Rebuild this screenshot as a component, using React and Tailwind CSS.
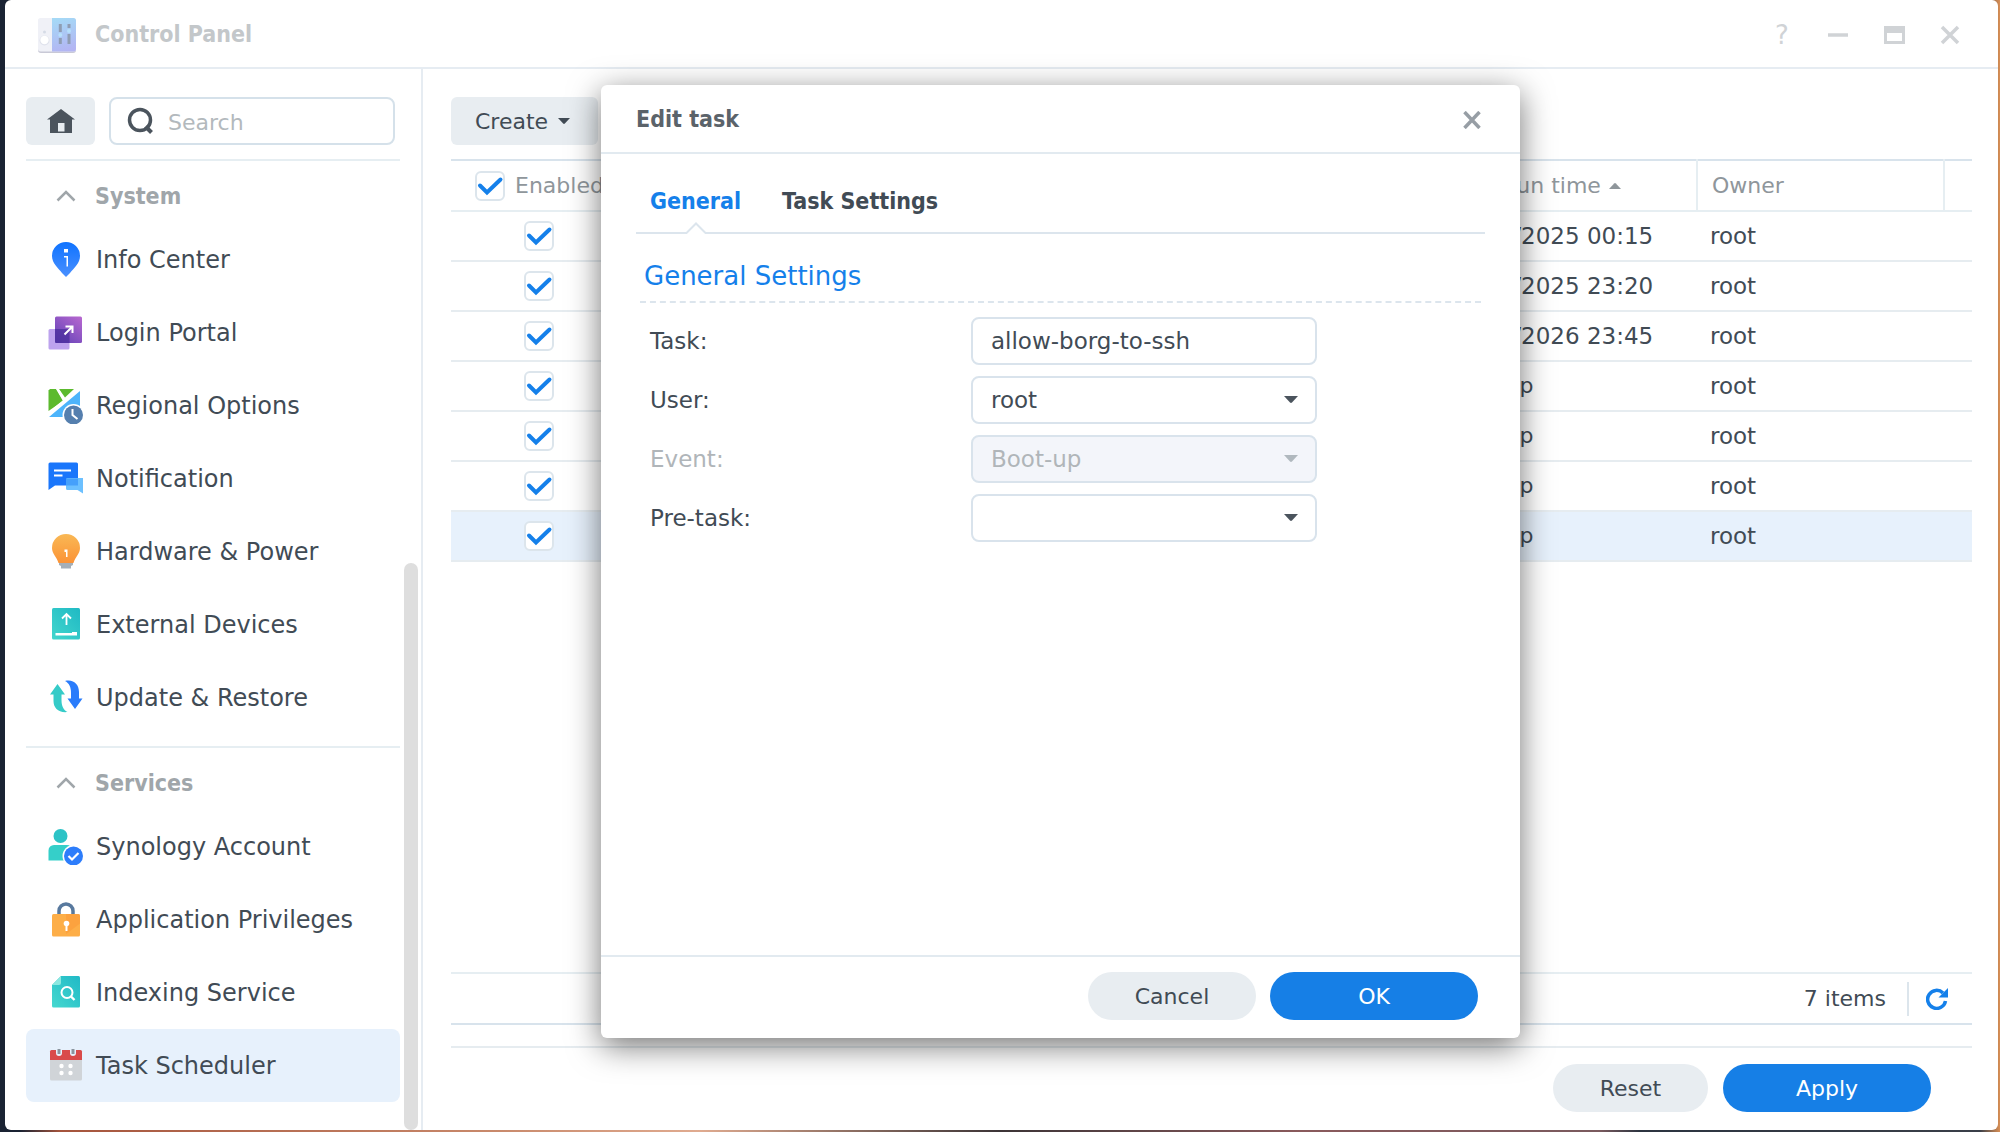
import React, { useState } from "react";

const systemItems = [
  { name: "Info Center", icon: InfoIcon },
  { name: "Login Portal", icon: LoginIcon },
  { name: "Regional Options", icon: RegionIcon },
  { name: "Notification", icon: NotificationIcon },
  { name: "Hardware & Power", icon: BulbIcon },
  { name: "External Devices", icon: DeviceIcon },
  { name: "Update & Restore", icon: UpdateIcon },
];

const serviceItems = [
  { name: "Synology Account", icon: AccountIcon },
  { name: "Application Privileges", icon: LockIcon },
  { name: "Indexing Service", icon: IndexIcon },
  { name: "Task Scheduler", icon: CalendarIcon },
];

const initialTasks = [
  { id: 1, next: "12/12/2025 00:15", owner: "root", enabled: true },
  { id: 2, next: "12/12/2025 23:20", owner: "root", enabled: true },
  { id: 3, next: "01/01/2026 23:45", owner: "root", enabled: true },
  { id: 4, next: "Boot-up", owner: "root", enabled: true },
  { id: 5, next: "Boot-up", owner: "root", enabled: true },
  { id: 6, next: "Boot-up", owner: "root", enabled: true },
  { id: 7, next: "Boot-up", owner: "root", enabled: true },
];

function InfoIcon() {
  return (
    <svg viewBox="0 0 36 36" className="h-9 w-9">
      <defs>
        <linearGradient id="info" x1="0" y1="0" x2="0" y2="1">
          <stop offset="0" stopColor="#0f73ff" />
          <stop offset="1" stopColor="#4a90ff" />
        </linearGradient>
      </defs>
      <path d="M18 0a14 14 0 0 1 14 14c0 7-6 12-10 17l-4 4-4-4C10 26 4 21 4 14A14 14 0 0 1 18 0z" fill="url(#info)" />
      <path d="M16 7h4v3.500h-4zM16 14h4v10.500h-1.500V15.500H16z" fill="#fff" />
    </svg>
  );
}

function LoginIcon() {
  return (
    <svg viewBox="0 0 36 36" className="h-9 w-9">
      <defs>
        <linearGradient id="login" x1="1" y1="0" x2="0.2" y2="1">
          <stop offset="0" stopColor="#b968d0" />
          <stop offset="1" stopColor="#6544b8" />
        </linearGradient>
      </defs>
      <rect x="0.500" y="14" width="21" height="20.500" rx="1.500" fill="#bda3ee" />
      <rect x="7" y="1.500" width="27" height="26.500" rx="1.500" fill="url(#login)" />
      <path d="M7 14h14.500v14H8.500A1.500 1.500 0 0 1 7 26.500z" fill="#4a2f9c" fillOpacity="0.750" />
      <path d="M16.500 19.500L24 12M17.500 11.500h7V18" fill="none" stroke="#fff" strokeWidth="2" />
    </svg>
  );
}

function RegionIcon() {
  return (
    <svg viewBox="0 0 36 36" className="h-9 w-9">
      <path d="M2 1h6l7 12L0.500 23V2.500z" fill="#5cba2e" />
      <path d="M11 1h15L17 9.500z" fill="#5cba2e" />
      <path d="M32 2v27H1L32 3z" fill="#4db4fb" />
      <path d="M0 26L31 0.500M9 0l7 12" stroke="#fff" strokeWidth="2.200" fill="none" />
      <circle cx="25.500" cy="27" r="11" fill="#fff" />
      <circle cx="25.500" cy="27" r="9.500" fill="#557fae" />
      <path d="M24.500 21v6l5 4" fill="none" stroke="#fff" strokeWidth="2" />
    </svg>
  );
}

function NotificationIcon() {
  return (
    <svg viewBox="0 0 36 36" className="h-9 w-9">
      <path d="M2 1.500h26.500a1.500 1.500 0 0 1 1.500 1.500v21.500H7L0.500 29V3A1.500 1.500 0 0 1 2 1.500z" fill="#1a76fb" />
      <path d="M19.500 17H35v15.500L29.500 29h-10A1.500 1.500 0 0 1 18 27.500v-9a1.500 1.500 0 0 1 1.500-1.500z" fill="#6cc0ff" />
      <path d="M18 17.500h12v7H18z" fill="#45a0fb" />
      <path d="M6 9.500h17M6 14.500h8.500" stroke="#fff" strokeWidth="2" />
    </svg>
  );
}

function BulbIcon() {
  return (
    <svg viewBox="0 0 36 36" className="h-9 w-9">
      <defs>
        <linearGradient id="bulb" x1="0" y1="0" x2="0" y2="1">
          <stop offset="0" stopColor="#f9b855" />
          <stop offset="1" stopColor="#fb9336" />
        </linearGradient>
      </defs>
      <path d="M11 29h14v2l-2 1v2.500H13V32l-2-1z" fill="#a5afb8" />
      <path d="M18 0a14 14 0 0 1 14 14c0 6-5 9-6.500 15h-15C9 23 4 20 4 14A14 14 0 0 1 18 0z" fill="url(#bulb)" />
      <path d="M16.500 15.500h3v7.500h-1.500v-5h-1.500z" fill="#fff" />
    </svg>
  );
}

function DeviceIcon() {
  return (
    <svg viewBox="0 0 36 36" className="h-9 w-9">
      <defs>
        <linearGradient id="device" x1="1" y1="0" x2="0" y2="1">
          <stop offset="0" stopColor="#1fb9c4" />
          <stop offset="1" stopColor="#42d6cd" />
        </linearGradient>
      </defs>
      <rect x="4" y="1" width="28" height="31.500" rx="1.500" fill="url(#device)" />
      <path d="M18.500 18V7.500M14 11.500L18.500 7l4.500 4.500" fill="none" stroke="#fff" strokeWidth="1.800" />
      <path d="M7.500 26H24v-1h5v3.500H7.500z" fill="#fff" />
    </svg>
  );
}

function UpdateIcon() {
  return (
    <svg viewBox="0 0 36 36" className="h-9 w-9">
      <path d="M9.500 4L17 14.500h-3.500V20c0 6 2 10 6 12-9 1-14-4-14-11v-6.500H2z" fill="#35cbc8" />
      <path d="M27 29L19.500 18.500H23V13c0-6-2-10-6-12 9-2 14 4 14 11v6.500h3.500z" fill="#2a7cfb" />
    </svg>
  );
}

function AccountIcon() {
  return (
    <svg viewBox="0 0 36 36" className="h-9 w-9">
      <circle cx="12.500" cy="7" r="7" fill="#2cc3c6" />
      <path d="M6 16h13a5 5 0 0 1 5 5v10.500H0.500V21.500A5.500 5.500 0 0 1 6 16z" fill="#35cfc9" />
      <circle cx="25.500" cy="27" r="11" fill="#fff" />
      <circle cx="25.500" cy="27" r="9.500" fill="#2d7dfb" />
      <path d="M20.500 27l3.500 3.500 6.500-6.500" fill="none" stroke="#fff" strokeWidth="2.200" />
    </svg>
  );
}

function LockIcon() {
  return (
    <svg viewBox="0 0 36 36" className="h-9 w-9">
      <path d="M11 13V9a7 7 0 0 1 14 0v4" fill="none" stroke="#58799e" strokeWidth="3.500" />
      <rect x="4" y="12" width="28" height="22.500" rx="1.500" fill="#fdae48" />
      <path d="M18 12h12.500a1.500 1.500 0 0 1 1.500 1.500v8L18 32z" fill="#fb9a3a" fillOpacity="0.600" />
      <circle cx="18.500" cy="21.500" r="2.800" fill="#fff" />
      <path d="M17.500 22h2v7h-2z" fill="#fff" />
    </svg>
  );
}

function IndexIcon() {
  return (
    <svg viewBox="0 0 36 36" className="h-9 w-9">
      <defs>
        <linearGradient id="index" x1="1" y1="0" x2="0" y2="1">
          <stop offset="0" stopColor="#20b9c6" />
          <stop offset="1" stopColor="#45d8cf" />
        </linearGradient>
      </defs>
      <path d="M13 1h17.500A1.500 1.500 0 0 1 32 2.500V31a1.500 1.500 0 0 1-1.500 1.500h-25A1.500 1.500 0 0 1 4 31V10z" fill="url(#index)" />
      <path d="M13 1v7a2 2 0 0 1-2 2H4z" fill="#8be8e0" />
      <circle cx="19" cy="17.500" r="5.500" fill="none" stroke="#fff" strokeWidth="2" />
      <path d="M23 21.500l3.500 3.500" stroke="#fff" strokeWidth="2.400" />
    </svg>
  );
}

function CalendarIcon() {
  return (
    <svg viewBox="0 0 36 36" className="h-9 w-9">
      <path d="M2 11h32v20a1.500 1.500 0 0 1-1.500 1.500h-29A1.500 1.500 0 0 1 2 31z" fill="#d0d4d8" />
      <path d="M3.500 2h29A1.500 1.500 0 0 1 34 3.500v8.500H2V3.500A1.500 1.500 0 0 1 3.500 2z" fill="#d94a4a" />
      <path d="M8 1h6v4a3 3 0 0 1-6 0zM22 1h6v4a3 3 0 0 1-6 0z" fill="#e7f1fc" />
      <path d="M11 1v5M25 1v5" stroke="#8a949e" strokeWidth="3" />
      <g fill="#fff">
        <circle cx="13.500" cy="18" r="2.200" />
        <circle cx="22.500" cy="18" r="2.200" />
        <circle cx="13.500" cy="25" r="2.200" />
        <circle cx="22.500" cy="25" r="2.200" />
      </g>
    </svg>
  );
}

function ControlPanelIcon() {
  return (
    <svg viewBox="0 0 40 36" className="h-9 w-10">
      <defs>
        <linearGradient id="panel" x1="0.300" y1="0" x2="0.500" y2="1">
          <stop offset="0" stopColor="#a5d9f6" />
          <stop offset="1" stopColor="#b3b5f3" />
        </linearGradient>
      </defs>
      <rect x="1" y="2" width="38" height="34" rx="3" fill="#c9c9d6" />
      <rect x="1" y="1" width="38" height="33.500" rx="2.500" fill="#f0f1f7" />
      <path d="M15 1h21.500A2.500 2.500 0 0 1 39 3.500V32a2.500 2.500 0 0 1-2.500 2.500H15z" fill="url(#panel)" />
      <circle cx="7.500" cy="15" r="1.500" fill="#d5dbe6" />
      <circle cx="7.500" cy="23.500" r="5" fill="#dfe2ec" />
      <circle cx="7.500" cy="23" r="4.200" fill="#fff" />
      <path d="M23.300 7v8M23.300 21v6M32 7v4M32 17v10" stroke="#8f9db3" strokeWidth="3" />
      <circle cx="23.300" cy="18" r="2" fill="#b5e0fb" />
      <circle cx="32" cy="14" r="2" fill="#b5e0fb" />
    </svg>
  );
}

const Caret = ({ className }) => (
  <svg viewBox="0 0 14 7" className={className}>
    <path d="M0 0h14L8 6.500a1.500 1.500 0 0 1-2 0z" fill="currentColor" />
  </svg>
);

const CheckBox = ({ checked, onChange, label }) => (
  <span className="relative block h-[30px] w-[30px] shrink-0">
    <input
      type="checkbox"
      aria-label={label}
      checked={checked}
      onChange={onChange}
      className="block h-[30px] w-[30px] appearance-none rounded-md border-2 border-[#dce5ec] bg-white"
    />
    {checked && (
      <svg viewBox="0 0 30 30" className="pointer-events-none absolute inset-0 h-[30px] w-[30px]">
        <path d="M5 14.500l7 7L25.500 8.500" fill="none" stroke="#1580ea" strokeWidth="4" strokeLinecap="round" />
      </svg>
    )}
  </span>
);

const NavGroup = ({ title, items, selected, onSelect }) => (
  <section className="border-t-2 border-[#e6eef2]">
    <h2 className="flex h-[62px] items-center pt-2">
      <button
        type="button"
        className="flex items-center gap-[19px] pl-[30px] font-['DejaVu_Sans_Condensed','DejaVu_Sans',sans-serif] text-[23px] font-bold text-[#a0a6aa]"
      >
        <svg viewBox="0 0 20 12" className="h-3 w-5">
          <path d="M1.500 10.500L10 2l8.500 8.500" fill="none" stroke="currentColor" strokeWidth="2.500" />
        </svg>
        {title}
      </button>
    </h2>
    <ul>
      {items.map((item) => (
        <li key={item.name}>
          <a
            href="#"
            onClick={() => onSelect(item.name)}
            className={`flex h-[73px] items-center gap-3 rounded-lg pl-[22px] text-2xl whitespace-nowrap ${
              selected === item.name ? "bg-[#e7f1fc]" : ""
            }`}
          >
            <item.icon />
            {item.name}
          </a>
        </li>
      ))}
    </ul>
  </section>
);

const Sidebar = () => {
  const [selected, setSelected] = useState("Task Scheduler");

  return (
    <aside className="flex w-[418px] shrink-0 flex-col border-r-2 border-[#e6ecf2] pt-7">
      <div className="flex gap-[14px] pr-[26px] pb-[14px] pl-[21px]">
        <button
          type="button"
          aria-label="Home"
          className="flex h-12 w-[69px] items-center justify-center rounded-md bg-[#e8edf1]"
        >
          <svg viewBox="0 0 28 26" className="h-[26px] w-7">
            <path d="M14 1l14 10.500h-3V25H3V11.500H0zM11 15v8.500h6.500V15z" fill="#4b545d" fillRule="evenodd" />
          </svg>
        </button>
        <label className="flex h-12 min-w-0 flex-1 items-center gap-[15px] rounded-lg border-2 border-[#d5e1ea] pl-4">
          <svg viewBox="0 0 26 28" className="h-7 w-[26px] shrink-0">
            <circle cx="13" cy="13" r="10.500" fill="none" stroke="#4b545d" strokeWidth="3.500" />
            <path d="M18.500 19.500l6 6" stroke="#4b545d" strokeWidth="4" />
          </svg>
          <input
            type="text"
            aria-label="Search"
            placeholder="Search"
            className="w-full min-w-0 bg-transparent pt-[2px] text-[22px] outline-none placeholder:text-[#b3b9bd]"
          />
        </label>
      </div>
      <div className="flex flex-1 gap-1">
        <nav className="ml-[21px] flex flex-1 flex-col gap-3">
          <NavGroup title="System" items={systemItems} selected={selected} onSelect={setSelected} />
          <NavGroup title="Services" items={serviceItems} selected={selected} onSelect={setSelected} />
        </nav>
        {/* scrollbar */}
        <div className="mr-[3px] flex w-[14px] flex-col justify-end">
          <div className="h-[567px] rounded-full bg-[#dedede]"></div>
        </div>
      </div>
    </aside>
  );
};

const TaskTable = () => {
  const [tasks, setTasks] = useState(initialTasks);
  const allEnabled = tasks.every((t) => t.enabled);

  const toggle = (id) => {
    setTasks(tasks.map((t) => (t.id === id ? { ...t, enabled: !t.enabled } : t)));
  };

  const toggleAll = () => {
    setTasks(tasks.map((t) => ({ ...t, enabled: !allEnabled })));
  };

  return (
    <table className="w-full table-fixed border-collapse">
      <colgroup>
        <col className="w-[176px]" />
        <col />
        <col className="w-[264px]" />
        <col className="w-[247px]" />
        <col className="w-7" />
      </colgroup>
      <thead>
        <tr className="h-[51px] border-t-2 border-b-2 border-t-[#d8e3ec] border-b-[#e6eef2] text-left text-[22px] text-[#8f969b]">
          <th className="py-0 pl-6 font-normal">
            <span className="flex items-center gap-[10px]">
              <CheckBox checked={allEnabled} onChange={toggleAll} label="Enable all" />
              Enabled
            </span>
          </th>
          <th></th>
          <th className="border-r-2 border-[#e6eef2] py-0 pl-4 font-normal">
            <span className="flex items-center gap-2 whitespace-nowrap">
              Next run time
              <Caret className="h-[6px] w-3 rotate-180" />
            </span>
          </th>
          <th className="border-r-2 border-[#e6eef2] py-0 pl-[14px] font-normal">Owner</th>
          <th></th>
        </tr>
      </thead>
      <tbody>
        {tasks.map((task) => (
          <tr
            key={task.id}
            className={`h-[50px] border-b-2 border-[#e6ecf0] text-[23px] leading-7 ${task.id === 7 ? "bg-[#e7f1fc]" : ""}`}
          >
            <td className="p-0">
              <span className="flex justify-center">
                <CheckBox checked={task.enabled} onChange={() => toggle(task.id)} label={`Enable task ${task.id}`} />
              </span>
            </td>
            <td></td>
            <td className={`py-0 pl-[14px] whitespace-nowrap ${task.next === "Boot-up" ? "text-[22px]" : ""}`}>
              {task.next}
            </td>
            <td className="py-0 pl-[13px]">{task.owner}</td>
            <td></td>
          </tr>
        ))}
      </tbody>
    </table>
  );
};

const SelectField = ({ id, value, options, disabled }) => (
  <div className="relative">
    <select
      id={id}
      defaultValue={value}
      disabled={disabled}
      className="block h-12 w-full appearance-none rounded-lg border-2 border-[#d9e3ec] bg-white pl-[18px] text-[23px] disabled:bg-[#f3f5fa] disabled:text-[#b0b5b9] disabled:opacity-100"
    >
      {options.map((o) => (
        <option key={o} value={o}>
          {o}
        </option>
      ))}
    </select>
    <Caret
      className={`pointer-events-none absolute top-5 right-[19px] h-[7px] w-[14px] ${
        disabled ? "text-[#b0b8be]" : "text-[#4b545d]"
      }`}
    />
  </div>
);

const EditTask = () => {
  const [tab, setTab] = useState("General");

  return (
    <div
      role="dialog"
      aria-label="Edit task"
      className="absolute top-[85px] left-[601px] flex min-h-[953px] w-[919px] flex-col rounded-md bg-white shadow-[0_8px_32px_rgba(0,0,0,0.55)]"
    >
      <div className="flex h-[69px] items-center justify-between border-b-2 border-[#e2eaf0] pt-[2px] pr-[39px] pl-[35px]">
        <h1 className="font-['DejaVu_Sans_Condensed','DejaVu_Sans',sans-serif] text-[23px] font-bold text-[#5b636a]">
          Edit task
        </h1>
        <button type="button" aria-label="Close dialog">
          <svg viewBox="0 0 18 18" className="h-[18px] w-[18px]">
            <path d="M1.500 1l15 16M16.500 1l-15 16" stroke="#979ea5" strokeWidth="3.500" />
          </svg>
        </button>
      </div>

      <div className="flex-1 px-[35px] pt-6">
        <div role="tablist" className="flex gap-[41px] border-b-2 border-[#dce5ed] pl-[14px]">
          {["General", "Task Settings"].map((name) => (
            <button
              key={name}
              type="button"
              role="tab"
              aria-selected={tab === name}
              onClick={() => setTab(name)}
              className={`relative h-[54px] pb-2 font-['DejaVu_Sans_Condensed','DejaVu_Sans',sans-serif] text-[23px] font-bold ${
                tab === name ? "text-[#1580ea]" : "text-[#414b55]"
              }`}
            >
              {name}
              {tab === name && (
                <svg viewBox="0 0 22 12" className="absolute -bottom-[2px] left-1/2 h-3 w-[22px] -translate-x-1/2">
                  <path d="M1 12L11 1.500 21 12z" fill="#fff" />
                  <path d="M0 11h1.500L11 1.500l9.500 9.500H22" fill="none" stroke="#dce5ed" strokeWidth="2" />
                </svg>
              )}
            </button>
          ))}
        </div>

        <div className="px-1 pt-[21px]">
          <h2 className="border-b-2 border-dashed border-[#dce5ed] pb-1 pl-1 text-[26px] leading-[42px] text-[#1580ea]">
            General Settings
          </h2>
          <form className="grid grid-cols-[321px_346px] items-center gap-y-[11px] pt-[14px] pl-[10px] text-[23px]">
            <label htmlFor="task">Task:</label>
            <input
              id="task"
              type="text"
              defaultValue="allow-borg-to-ssh"
              className="h-12 w-full rounded-lg border-2 border-[#d9e3ec] pl-[18px]"
            />
            <label htmlFor="user">User:</label>
            <SelectField id="user" value="root" options={["root"]} />
            <label htmlFor="event" className="text-[#b0b5b9]">
              Event:
            </label>
            <SelectField id="event" value="Boot-up" options={["Boot-up"]} disabled />
            <label htmlFor="pretask">Pre-task:</label>
            <SelectField id="pretask" value="" options={[""]} />
          </form>
        </div>
      </div>

      <div className="flex h-[83px] items-center justify-end gap-[14px] border-t-2 border-[#e2eaf0] pr-[42px] pb-[3px]">
        <button type="button" className="h-12 w-[168px] rounded-full bg-[#e8edf1] text-[22px]">
          Cancel
        </button>
        <button type="button" className="h-12 w-[208px] rounded-full bg-[#167fe6] text-[22px] text-white">
          OK
        </button>
      </div>
    </div>
  );
};

export default function App() {
  return (
    <div className="relative flex min-h-screen flex-col bg-[linear-gradient(90deg,#1a2333_0%,#1a2333_1%,#a5543c_3%,#c98a6c_25%,#e0ab90_35%,#3c3436_50%,#8a5a5c_65%,#7a5a5e_80%,#2c3440_82%,#3a3f48_99%,#d98f55_100%)] pr-[2px] pb-[2px] pl-[5px] font-['DejaVu_Sans',Verdana,sans-serif] text-[#414b55]">
      <div className="flex flex-1 flex-col overflow-hidden rounded-md bg-white">
        <header className="flex h-[69px] items-center justify-between border-b-2 border-[#e6ecf2] pt-[2px] pr-[37px] pl-8">
          <div className="flex items-center gap-[18px]">
            <ControlPanelIcon />
            <span className="font-['DejaVu_Sans_Condensed','DejaVu_Sans',sans-serif] text-[23px] font-bold text-[#c3c7ca]">
              Control Panel
            </span>
          </div>
          <div className="flex items-center gap-[34px] text-[#d0d3d6]">
            <button type="button" className="w-[22px] text-[26px] leading-7">
              ?
            </button>
            <button type="button" aria-label="Minimize">
              <svg viewBox="0 0 22 22" className="h-[22px] w-[22px]">
                <path d="M1 11h20" stroke="currentColor" strokeWidth="3.500" />
              </svg>
            </button>
            <button type="button" aria-label="Maximize">
              <svg viewBox="0 0 22 22" className="h-[22px] w-[22px]">
                <path d="M1 2h21v18H1zM4 9v8h15V9z" fill="currentColor" fillRule="evenodd" />
              </svg>
            </button>
            <button type="button" aria-label="Close">
              <svg viewBox="0 0 22 22" className="h-[22px] w-[22px]">
                <path d="M3 3l16 16M19 3L3 19" stroke="currentColor" strokeWidth="3.500" />
              </svg>
            </button>
          </div>
        </header>

        <div className="flex flex-1">
          <Sidebar />
          <main className="flex min-w-0 flex-1 flex-col pt-7 pr-[26px] pl-7">
            <div className="pb-[14px]">
              <button
                type="button"
                className="flex h-12 w-[147px] items-center gap-[10px] rounded-md bg-[#e8edf1] pl-6 text-[22px]"
              >
                Create
                <Caret className="h-[6px] w-3" />
              </button>
            </div>
            <TaskTable />
            <div className="mt-auto flex h-[53px] items-center justify-end gap-[21px] border-t-2 border-b-2 border-t-[#e6eef2] border-b-[#d8e3ec] pr-6 text-[22px]">
              <span>7 items</span>
              <span className="h-[34px] w-[2px] bg-[#dce5ec]"></span>
              <button type="button" aria-label="Refresh" className="-ml-1">
                <svg viewBox="0 0 22 22" className="h-[22px] w-[22px]">
                  <path d="M17 5A9 9 0 1 0 19.500 13" fill="none" stroke="#1580ea" strokeWidth="3.500" />
                  <path d="M22 0v9.500h-9.500z" fill="#1580ea" />
                </svg>
              </button>
            </div>
            <div className="mt-[21px] flex justify-end gap-[15px] border-t-2 border-[#e6ecf0] pt-4 pr-[41px] pb-[18px]">
              <button type="button" className="h-12 w-[155px] rounded-full bg-[#e8edf1] text-[22px]">
                Reset
              </button>
              <button type="button" className="h-12 w-[208px] rounded-full bg-[#167fe6] text-[22px] text-white">
                Apply
              </button>
            </div>
          </main>
        </div>
      </div>
      <EditTask />
    </div>
  );
}
